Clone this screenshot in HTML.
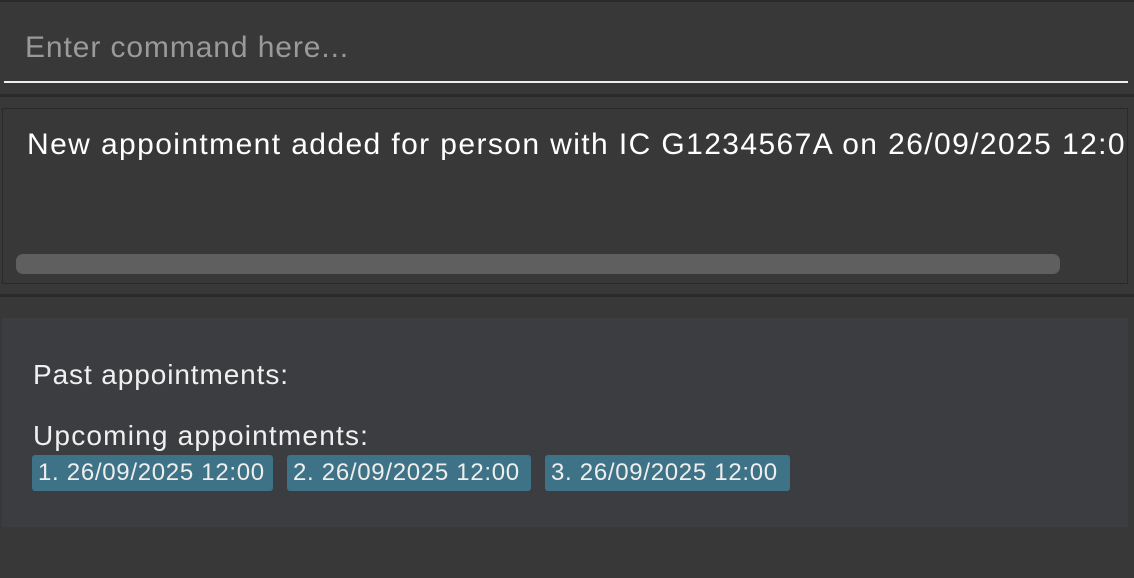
<!DOCTYPE html>
<html><head><style>
body{margin:0;width:1134px;height:578px;background:#383838;position:relative;overflow:hidden;font-family:"Liberation Sans",sans-serif;}
.a{position:absolute}
.chip{position:absolute;top:455px;height:36px;background:#3e7387;border-radius:3px;color:#eee;font-size:24px;line-height:36px;padding:0 6px;box-sizing:border-box;letter-spacing:0.7px;white-space:nowrap;overflow:hidden}
</style></head><body>
<div class="a" style="left:0;top:0;width:1134px;height:2px;background:#2a2a2a"></div>
<div class="a" style="left:25px;top:28px;font-size:30px;color:#9a9a9a;letter-spacing:0.9px;line-height:40px">Enter command here...</div>
<div class="a" style="left:4px;top:81px;width:1124px;height:2px;background:#f0f0f0"></div>
<div class="a" style="left:0;top:94px;width:1134px;height:3px;background:#2b2b2b"></div>
<div class="a" style="left:2px;top:108px;width:1124px;height:174px;border:1px solid #2a2a2a;overflow:hidden">
<div class="a" style="left:24px;top:16px;font-size:30px;color:#fff;white-space:nowrap;letter-spacing:1.4px;line-height:40px">New appointment added for person with IC G1234567A on 26/09/2025 12:00</div>
<div class="a" style="left:13px;top:145px;width:1044px;height:20px;background:#5f5f5f;border-radius:7px"></div>
</div>
<div class="a" style="left:1128px;top:108px;width:6px;height:176px;background:#383838"></div>
<div class="a" style="left:0;top:294px;width:1134px;height:3px;background:#2b2b2b"></div>
<div class="a" style="left:2px;top:318px;width:1126px;height:209px;background:#3c3d40"></div>
<div class="a" style="left:33px;top:357px;font-size:28px;color:#f0f0f0;letter-spacing:0.9px;line-height:36px">Past appointments:</div>
<div class="a" style="left:33px;top:418px;font-size:28px;color:#f0f0f0;letter-spacing:1.2px;line-height:36px">Upcoming appointments:</div>
<div class="chip" style="left:32px;width:241px">1. 26/09/2025 12:00</div>
<div class="chip" style="left:287px;width:244px">2. 26/09/2025 12:00</div>
<div class="chip" style="left:545px;width:245px">3. 26/09/2025 12:00</div>
</body></html>
